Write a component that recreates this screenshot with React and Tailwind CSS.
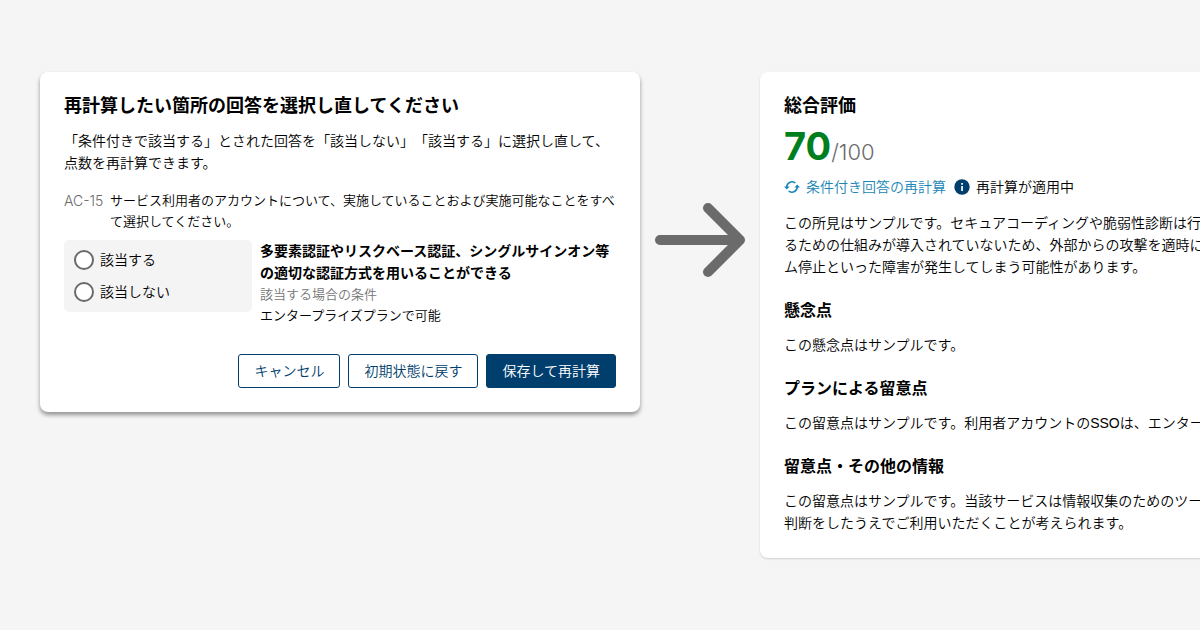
function Arrow() {
  return (
    <svg viewBox="0 0 90 74" className="h-[74px] w-[90px]" fill="none" stroke="#6b6b6b" strokeWidth="10" strokeLinecap="round" strokeLinejoin="round" aria-hidden="true">
      <path d="M5 37H85M53 5L85 37L53 69" />
    </svg>
  );
}

function RecalcIcon() {
  return (
    <svg viewBox="0 0 16 16" className="size-4 shrink-0" fill="none" stroke="#1a86b5" strokeWidth="1.6" strokeLinecap="round" aria-hidden="true">
      <path d="M2.8 8A5.2 5.2 0 0 1 10.8 3.6M13.2 8A5.2 5.2 0 0 1 5.2 12.4" />
      <path d="M0 7.6H5.6L2.8 10.6ZM16 8.4H10.4L13.2 5.4Z" fill="#1a86b5" stroke="none" />
    </svg>
  );
}

function InfoIcon() {
  return (
    <svg viewBox="0 0 16 16" className="size-4 shrink-0" aria-hidden="true">
      <circle cx="8" cy="8" r="7.7" fill="#003e6d" />
      <path d="M7.2 4h1.7v1.7H7.2zM7.2 7h1.7v4.9H7.2z" fill="#fff" />
    </svg>
  );
}

function Choice({ id, label }) {
  return (
    <div className="flex h-8 items-center gap-1.5">
      <input id={id} type="radio" name="ac-15" className="size-5 shrink-0 appearance-none rounded-full border-2 border-[#6b6b6b] bg-white checked:border-[6px]" />
      <label htmlFor={id} className="text-sm">{label}</label>
    </div>
  );
}

function Note({ title, children }) {
  return (
    <section className="mt-[21px]">
      <h3 className="text-base leading-6 font-bold">{title}</h3>
      <p className="mt-[11px] text-sm leading-[22px]">{children}</p>
    </section>
  );
}

const outlined = "h-[34px] rounded-[3px] border border-[#003e6d] bg-white px-[15px] text-sm text-[#003e6d]";
const filled = "h-[34px] rounded-[3px] border border-[#003e6d] bg-[#003e6d] px-[15px] text-sm text-white";

export default function App() {
  return (
    <main className="flex min-h-screen items-start overflow-hidden bg-[#f5f5f5] px-10 py-[72px] font-['Liberation_Sans','Noto_Sans_CJK_JP',sans-serif] font-[350] text-black [text-spacing-trim:space-all]" lang="ja">
      <form className="w-[600px] shrink-0 rounded-lg bg-white p-6 shadow-[0_3px_4px_rgba(0,0,0,0.4)]">
        <h1 className="text-lg leading-5 font-bold">再計算したい箇所の回答を選択し直してください</h1>
        <p className="mt-3.5 text-sm leading-[22px]">
          「条件付きで該当する」とされた回答を「該当しない」「該当する」に選択し直して、点数を再計算できます。
        </p>
        <div className="mt-4 flex gap-1 text-[13px] leading-[21px]">
          <span className="w-[42px] shrink-0 font-['Inter',sans-serif] text-sm leading-[21px] font-light whitespace-nowrap text-[#6b6b6b]">AC-15</span>
          <p>サービス利用者のアカウントについて、実施していることおよび実施可能なことをすべて選択してください。</p>
        </div>
        <div className="mt-2 flex items-start gap-2">
          <fieldset className="w-[188px] shrink-0 rounded-[5px] bg-[#f4f4f4] px-2.5 py-1">
            <Choice id="applies" label="該当する" />
            <Choice id="not-applies" label="該当しない" />
          </fieldset>
          <div className="text-[13px] leading-[21px]">
            <h2 className="text-sm leading-[22px] font-bold">多要素認証やリスクベース認証、シングルサインオン等の適切な認証方式を用いることができる</h2>
            <p className="text-[#767676]">該当する場合の条件</p>
            <p>エンタープライズプランで可能</p>
          </div>
        </div>
        <div className="mt-7 flex justify-end gap-2">
          <button type="button" className={outlined}>キャンセル</button>
          <button type="reset" className={outlined}>初期状態に戻す</button>
          <button type="button" className={filled}>保存して再計算</button>
        </div>
      </form>

      <div className="flex w-[120px] shrink-0 justify-center pt-[131px]">
        <Arrow />
      </div>

      <section className="w-[600px] shrink-0 rounded-lg bg-white p-6 whitespace-nowrap shadow-[0_1px_2px_rgba(0,0,0,0.15)]">
        <h2 className="text-lg leading-5 font-bold">総合評価</h2>
        <p className="mt-2.5 flex h-11 items-baseline font-['Inter',sans-serif]">
          <strong className="text-[38px] leading-10 font-bold text-[#007f1e]">70</strong>
          <span className="text-[22px] leading-10 font-light text-[#6b6b6b]">/100</span>
        </p>
        <div className="mt-[5px] flex items-center gap-2 text-sm leading-6">
          <a href="#recalculate" className="flex items-center gap-1.5 text-[#1a86b5]">
            <RecalcIcon />
            条件付き回答の再計算
          </a>
          <span className="flex items-center gap-1.5">
            <InfoIcon />
            再計算が適用中
          </span>
        </div>
        <p className="mt-[13px] text-sm leading-[22px]">
          この所見はサンプルです。セキュアコーディングや脆弱性診断は行<br />
          るための仕組みが導入されていないため、外部からの攻撃を適時に<br />
          ム停止といった障害が発生してしまう可能性があります。
        </p>
        <Note title="懸念点">この懸念点はサンプルです。</Note>
        <Note title="プランによる留意点">この留意点はサンプルです。利用者アカウントのSSOは、エンター</Note>
        <Note title="留意点・その他の情報">
          この留意点はサンプルです。当該サービスは情報収集のためのツー<br />
          判断をしたうえでご利用いただくことが考えられます。
        </Note>
      </section>
    </main>
  );
}
